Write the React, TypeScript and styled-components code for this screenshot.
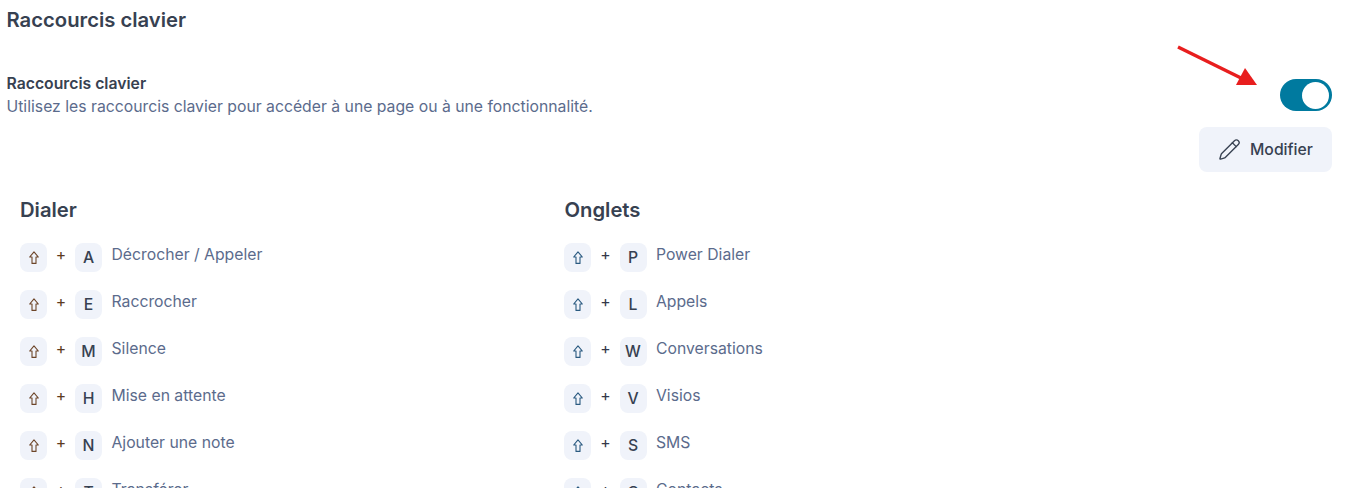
import styled, { createGlobalStyle } from 'styled-components'
import { Pencil } from 'lucide-react'

const GlobalStyle = createGlobalStyle`
  html, body {
    margin: 0;
    padding: 0;
    height: 492px;
    overflow: hidden;
    background: #fff;
    font-family: Inter, "Liberation Sans", sans-serif;
  }
`

const Page = styled.div`
  position: relative;
  width: 1346px;
  height: 488px;
  overflow: hidden;
  box-sizing: border-box;
  padding: 9px 14px 0 6.5px;
`

const PageTitle = styled.h1`
  margin: 0;
  font-size: 20.25px;
  line-height: 22px;
  font-weight: 600;
  color: #374151;
`

const SettingRow = styled.div`
  display: flex;
  justify-content: space-between;
  align-items: flex-start;
  margin-top: 29px;
`

const SettingText = styled.div`
  padding-top: 13px;
`

const SettingName = styled.div`
  font-size: 15.75px;
  line-height: 22px;
  font-weight: 600;
  color: #374151;
`

const SettingHint = styled.div`
  font-size: 15.75px;
  line-height: 24px;
  color: #5b6b8c;
`

const SettingActions = styled.div`
  display: flex;
  flex-direction: column;
  align-items: flex-end;
  gap: 16px;
  padding-top: 19px;
`

const Toggle = styled.div`
  display: flex;
  justify-content: flex-end;
  align-items: center;
  box-sizing: border-box;
  width: 52px;
  height: 32px;
  padding-right: 3px;
  border-radius: 16px;
  background: #007a9f;
`

const Knob = styled.span`
  width: 27px;
  height: 27px;
  border-radius: 50%;
  background: #fff;
`

const EditButton = styled.button`
  display: flex;
  align-items: center;
  gap: 9px;
  box-sizing: border-box;
  width: 133px;
  height: 45px;
  padding: 0 0 0 19px;
  border: 0;
  border-radius: 8px;
  background: #f0f3fa;
  color: #374151;
  font-family: inherit;
  font-size: 15.75px;
  font-weight: 500;
`

const Columns = styled.div`
  display: grid;
  grid-template-columns: 544.48px 1fr;
  margin-top: 25px;
  padding-left: 13.5px;
`

const ColumnTitle = styled.h2`
  margin: 0 0 20px;
  font-size: 20.25px;
  line-height: 26px;
  font-weight: 600;
  color: #374151;
`

const Shortcut = styled.div`
  display: flex;
  align-items: flex-start;
  height: 29px;
  margin-bottom: 18px;
`

const Key = styled.span`
  display: flex;
  justify-content: center;
  align-items: center;
  width: 27px;
  height: 29px;
  border-radius: 8px;
  background: #f0f3fa;
  color: #374151;
  font-size: 15.75px;
  font-weight: 500;
`

const Plus = styled.span<{ $tint: string }>`
  width: 28.05px;
  text-align: center;
  font-size: 15.75px;
  line-height: 24px;
  color: ${p => p.$tint};
`

const ShortcutLabel = styled.span`
  margin-left: 9.45px;
  font-size: 15.75px;
  line-height: 23px;
  color: #5b6b8c;
`

const Arrow = styled.svg`
  position: absolute;
  left: 1170px;
  top: 40px;
`

const columns = [
  {
    title: 'Dialer',
    shift: '#6d4529',
    plus: '#5c3a22',
    items: [
      ['A', 'Décrocher / Appeler'],
      ['E', 'Raccrocher'],
      ['M', 'Silence'],
      ['H', 'Mise en attente'],
      ['N', 'Ajouter une note'],
      ['T', 'Transférer'],
    ],
  },
  {
    title: 'Onglets',
    shift: '#2a5a80',
    plus: '#33384a',
    items: [
      ['P', 'Power Dialer'],
      ['L', 'Appels'],
      ['W', 'Conversations'],
      ['V', 'Visios'],
      ['S', 'SMS'],
      ['C', 'Contacts'],
    ],
  },
]

const ShiftIcon = ({ color }: { color: string }) => (
  <svg width='10' height='13' viewBox='0 0 10 13' fill='none' stroke={color} strokeWidth='1.1'>
    <path d='M5 .8 9.3 6H7v6.4H3V6H.7Z' strokeLinejoin='round' />
  </svg>
)

export default function App() {
  return (
    <Page>
      <GlobalStyle />
      <PageTitle>Raccourcis clavier</PageTitle>
      <SettingRow>
        <SettingText>
          <SettingName>Raccourcis clavier</SettingName>
          <SettingHint>Utilisez les raccourcis clavier pour accéder à une page ou à une fonctionnalité.</SettingHint>
        </SettingText>
        <SettingActions>
          <Toggle>
            <Knob />
          </Toggle>
          <EditButton>
            <Pencil size={23} strokeWidth={1.4} />
            Modifier
          </EditButton>
        </SettingActions>
      </SettingRow>
      <Columns>
        {columns.map(col => (
          <div key={col.title}>
            <ColumnTitle>{col.title}</ColumnTitle>
            {col.items.map(([letter, label]) => (
              <Shortcut key={letter}>
                <Key>
                  <ShiftIcon color={col.shift} />
                </Key>
                <Plus $tint={col.plus}>+</Plus>
                <Key>{letter}</Key>
                <ShortcutLabel>{label}</ShortcutLabel>
              </Shortcut>
            ))}
          </div>
        ))}
      </Columns>
      <Arrow width='100' height='60' viewBox='0 0 100 60'>
        <path d='M8 7 L71 38' stroke='#e81e1e' strokeWidth='3.5' />
        <path d='M75 28 L87 45 L66 45 Z' fill='#e81e1e' />
      </Arrow>
    </Page>
  )
}
